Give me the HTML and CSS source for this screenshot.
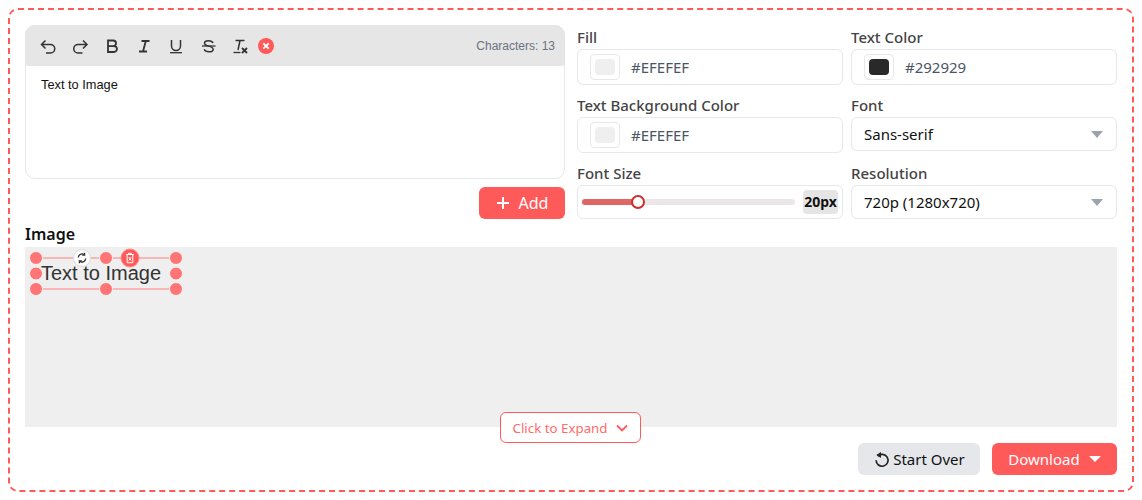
FILE: index.html
```html
<!DOCTYPE html>
<html lang="en">
<head>
  <meta charset="UTF-8" />
  <title>Text to Image</title>
  <link rel="stylesheet" href="styles.css">
</head>
<body>

<div class="container">
  <div class="top">
    <div class="left">
      <div class="editor">
        <div class="toolbar">
          <svg class="tool" viewBox="0 0 18 18"><path class="mid" d="M5.500 3.500l-4 4 4 4M1.500 7.500H10.500a4.250 4.250 0 0 1 0 8.500H6"/></svg>
          <svg class="tool" viewBox="0 0 18 18"><path class="mid" d="M11 3.500l4 4-4 4M15 7.500H6a4.250 4.250 0 0 0 0 8.500H10.500"/></svg>
          <svg class="tool" viewBox="0 0 18 18"><path class="thick" d="M4 3.500h5.200a2.800 2.800 0 0 1 0 5.600H4zM4 9.100h6a2.950 2.950 0 0 1 0 5.900H4z"/></svg>
          <svg class="tool" viewBox="0 0 18 18"><path class="thick" d="M5.500 4h8M3 14.500h8M9.800 4l-2.800 10.500"/></svg>
          <svg class="tool" viewBox="0 0 18 18"><path class="mid" d="M3.500 3v6a4.500 4.500 0 0 0 9 0V3"/><path d="M2 15.700h12"/></svg>
          <svg class="tool" viewBox="0 0 18 18"><path class="mid" d="M13 6c-.5-1.500-2-2.300-4.500-2.300-2.400 0-4 1-4 2.500 0 3.500 8.700 2.300 8.700 6 0 1.600-1.800 2.600-4.200 2.600-2.600 0-4.300-.9-4.800-2.500"/><path d="M2 9h13.500"/></svg>
          <svg class="tool" viewBox="0 0 18 18"><path class="mid" d="M3.500 3.500H12.500M8 3.500l-2 9.500"/><path d="M1.500 15.500H8.500"/><path class="thick" d="M10 11l5 5M15 11l-5 5"/></svg>
          <svg class="clear" viewBox="0 0 16 16"><circle cx="8" cy="8" r="8"/><path d="M5.300 5.300l5.400 5.400M10.700 5.300l-5.400 5.400"/></svg>
          <span class="count">Characters: 13</span>
        </div>
        <p class="editor-text">Text to Image</p>
      </div>
      <div class="add-row">
        <button class="btn btn-red btn-add">
          <svg class="plus" viewBox="0 0 14 14"><path d="M7 1v12M1 7h12"/></svg>
          Add
        </button>
      </div>
    </div>

    <div class="fields">
      <div class="form-group">
        <label>Fill</label>
        <div class="color-input">
          <span class="swatch"><i class="swatch-fill light"></i></span>
          <span class="hex">#EFEFEF</span>
        </div>
      </div>
      <div class="form-group">
        <label>Text Color</label>
        <div class="color-input">
          <span class="swatch"><i class="swatch-fill dark"></i></span>
          <span class="hex">#292929</span>
        </div>
      </div>
      <div class="form-group">
        <label>Text Background Color</label>
        <div class="color-input">
          <span class="swatch"><i class="swatch-fill light"></i></span>
          <span class="hex">#EFEFEF</span>
        </div>
      </div>
      <div class="form-group">
        <label>Font</label>
        <div class="select">Sans-serif<i class="arrow"></i></div>
      </div>
      <div class="form-group">
        <label>Font Size</label>
        <div class="slider-box">
          <div class="track">
            <div class="track-fill"></div>
            <div class="thumb"></div>
          </div>
          <span class="badge">20px</span>
        </div>
      </div>
      <div class="form-group">
        <label>Resolution</label>
        <div class="select">720p (1280x720)<i class="arrow"></i></div>
      </div>
    </div>
  </div>

  <h3>Image</h3>
  <div class="canvas">
    <div class="canvas-text">Text to Image</div>
    <svg class="selection" viewBox="0 0 170 56">
      <path class="sel-line top-line" d="M11 11H151"/>
      <path class="sel-line" d="M11 42H151"/>
      <g class="handles">
        <circle cx="11" cy="11" r="6.500"/>
        <circle cx="81" cy="11" r="6.500"/>
        <circle cx="151" cy="11" r="6.500"/>
        <circle cx="11" cy="26.500" r="6.500"/>
        <circle cx="151" cy="26.500" r="6.500"/>
        <circle cx="11" cy="42" r="6.500"/>
        <circle cx="81" cy="42" r="6.500"/>
        <circle cx="151" cy="42" r="6.500"/>
      </g>
      <circle class="rotate-bg" cx="57" cy="11" r="8.500"/>
      <path class="rotate-icon" d="M53.300 10.500a3.800 3.800 0 0 1 5.800-3M60.700 11.500a3.800 3.800 0 0 1-5.800 3M59.600 5.800v2.400h-2.400M54.400 16.200v-2.400h2.400"/>
      <circle class="delete-bg" cx="105" cy="11" r="9"/>
      <path class="delete-icon" d="M101.200 7.500h7.600M103.500 7.500v-1.200h3v1.200M102.200 7.500v8.200h5.600v-8.200M103.800 10l2.400 3.500M106.200 10l-2.400 3.500"/>
    </svg>
  </div>

  <div class="bottom">
    <button class="expand">Click to Expand
      <svg class="chevron" viewBox="0 0 12 8"><path d="M1 1.500l5 5 5-5"/></svg>
    </button>
    <div class="actions">
      <button class="btn btn-gray">
        <svg class="reset" viewBox="0 0 18 18"><path d="M5 5.500a6.300 6.300 0 1 1-1.700 4.300"/><path class="reset-head" d="M8.500 1v6.500l-5-3.200z"/></svg>
        Start Over
      </button>
      <button class="btn btn-red btn-download">Download<i class="arrow white"></i></button>
    </div>
  </div>
</div>

</body>
</html>
```

FILE: styles.css
```css
:root {
  --primary-color: #ff5a5a;
  --border-color: #e5e7eb;
  --label-color: #444;
}

* {
  box-sizing: border-box;
  font-family: 'Noto Sans', 'Open Sans', sans-serif;
}

body {
  margin: 8px;
  background: #fff;
}

.container {
  width: 1126px;
  height: 484px;
  padding: 15px;
  border: 2px dashed var(--primary-color);
  border-radius: 10px;
}

.top {
  display: flex;
  gap: 12px;
}

.left {
  width: 540px;
}

.editor {
  height: 154px;
  border: 1px solid var(--border-color);
  border-radius: 10px;
}

.toolbar {
  display: flex;
  align-items: center;
  height: 41px;
  margin: -1px -1px 0;
  padding: 0 10px 0 15px;
  background: #e6e6e6;
  border-radius: 10px 10px 4px 4px;
}

.tool {
  width: 18px;
  height: 18px;
  margin-right: 14px;
  fill: none;
  stroke: #333;
  stroke-width: 1.300;
}

.tool .thick {
  stroke-width: 1.800;
}

.tool .mid {
  stroke-width: 1.500;
}

.tool:nth-child(7) {
  margin-right: 0;
}

.clear {
  width: 16px;
  height: 16px;
  margin-left: 8px;
  fill: var(--primary-color);
  stroke: none;
}

.clear path {
  fill: none;
  stroke: #fff;
  stroke-width: 1.800;
}

.count {
  margin-left: auto;
  font-family: 'Liberation Sans', sans-serif;
  font-size: 12px;
  color: #6b7280;
}

.editor-text {
  margin: 11px 15px;
  font-family: 'Liberation Sans', sans-serif;
  font-size: 12.800px;
  line-height: 16px;
  color: #111;
}

.add-row {
  display: flex;
  justify-content: flex-end;
  margin-top: 8px;
}

.btn {
  display: inline-flex;
  align-items: center;
  justify-content: center;
  height: 32px;
  border: none;
  border-radius: 6px;
  font-size: 16px;
  cursor: pointer;
}

.btn-red {
  background: var(--primary-color);
  color: #fff;
}

.btn-gray {
  width: 122px;
  background: #e5e7eb;
  color: #111;
}

.btn-add {
  width: 86px;
}

.plus {
  width: 14px;
  height: 14px;
  margin-right: 9px;
  fill: none;
  stroke: #fff;
  stroke-width: 2;
}

.fields {
  display: grid;
  grid-template-columns: 266px 266px;
  column-gap: 8px;
  row-gap: 8px;
}

.form-group label {
  display: block;
  height: 24px;
  font-size: 15px;
  font-weight: 500;
  line-height: 24px;
  color: var(--label-color);
}

.color-input {
  display: flex;
  align-items: center;
  height: 36px;
  padding-left: 12px;
  border: 1px solid var(--border-color);
  border-radius: 6px;
}

.swatch {
  display: flex;
  align-items: center;
  justify-content: center;
  width: 30px;
  height: 26px;
  border: 1px solid var(--border-color);
  border-radius: 4px;
}

.swatch-fill {
  width: 20px;
  height: 16px;
  border-radius: 4px;
}

.swatch-fill.light {
  background: #efefef;
}

.swatch-fill.dark {
  background: #292929;
}

.hex {
  margin-left: 11px;
  font-size: 15px;
  color: #4b5563;
}

.select {
  display: flex;
  align-items: center;
  justify-content: space-between;
  height: 34px;
  padding: 0 13px 0 12px;
  border: 1px solid var(--border-color);
  border-radius: 6px;
  font-size: 15px;
  color: #111;
}

.arrow {
  width: 0;
  height: 0;
  border-left: 6.500px solid transparent;
  border-right: 6.500px solid transparent;
  border-top: 7px solid #9ca3af;
}

.arrow.white {
  margin-left: 9px;
  border-top-color: #fff;
  border-left-width: 6px;
  border-right-width: 6px;
  border-top-width: 6px;
}

.slider-box {
  display: flex;
  align-items: center;
  height: 34px;
  padding: 0 4px;
  border: 1px solid var(--border-color);
  border-radius: 6px;
}

.track {
  position: relative;
  width: 213px;
  height: 6px;
  background: #ebe6e7;
  border-radius: 3px;
}

.track-fill {
  width: 56px;
  height: 6px;
  background: #e06666;
  border-radius: 3px;
}

.thumb {
  position: absolute;
  left: 49px;
  top: -4px;
  width: 14px;
  height: 14px;
  background: #fff;
  border: 2px solid #cc2f2f;
  border-radius: 50%;
}

.badge {
  width: 35px;
  height: 24px;
  margin-left: 8px;
  background: #e5e5e5;
  border-radius: 4px;
  font-size: 14px;
  font-weight: 700;
  line-height: 24px;
  text-align: center;
  color: #111;
}

h3 {
  margin: 5px 0 3px;
  font-size: 16px;
  font-weight: 600;
  line-height: 20px;
  color: #111;
}

.canvas {
  position: relative;
  height: 180px;
  background: #efefef;
}

.canvas-text {
  position: absolute;
  left: 16px;
  top: 15px;
  font-family: 'Liberation Sans', sans-serif;
  font-size: 20px;
  line-height: 23px;
  color: #333;
}

.selection {
  position: absolute;
  left: 0;
  top: 0;
  width: 170px;
  height: 56px;
}

.sel-line {
  stroke: #ffa3a3;
  stroke-width: 1.500;
}

.sel-line.top-line {
  stroke: #ff8080;
  stroke-width: 1;
}

.handles circle {
  fill: #ff7575;
  stroke: #f6f6f6;
  stroke-width: 1;
}

.rotate-bg {
  fill: #fff;
  stroke: #ddd;
}

.rotate-icon {
  fill: none;
  stroke: #333;
  stroke-width: 1.300;
}

.delete-bg {
  fill: #ff5a5a;
  stroke: #ff8a8a;
}

.delete-icon {
  fill: none;
  stroke: #fff;
  stroke-width: 1;
}

.bottom {
  position: relative;
  display: flex;
  justify-content: flex-end;
  margin-top: 16px;
}

.expand {
  position: absolute;
  left: 475px;
  top: -31px;
  display: flex;
  align-items: center;
  justify-content: center;
  width: 141px;
  height: 31px;
  background: #fff;
  border: 1px solid var(--primary-color);
  border-radius: 6px;
  font-size: 13.300px;
  color: #ff6b6b;
  cursor: pointer;
}

.chevron {
  width: 12px;
  height: 8px;
  margin-left: 9px;
  fill: none;
  stroke: var(--primary-color);
  stroke-width: 1.800;
}

.actions {
  display: flex;
  gap: 12px;
}

.actions .btn {
  font-size: 15px;
}

.btn-download {
  width: 125px;
}

.reset {
  width: 17px;
  height: 17px;
  margin-right: 3px;
  fill: none;
  stroke: #222;
  stroke-width: 1.800;
}

.reset-head {
  fill: #222;
  stroke: none;
}
```
